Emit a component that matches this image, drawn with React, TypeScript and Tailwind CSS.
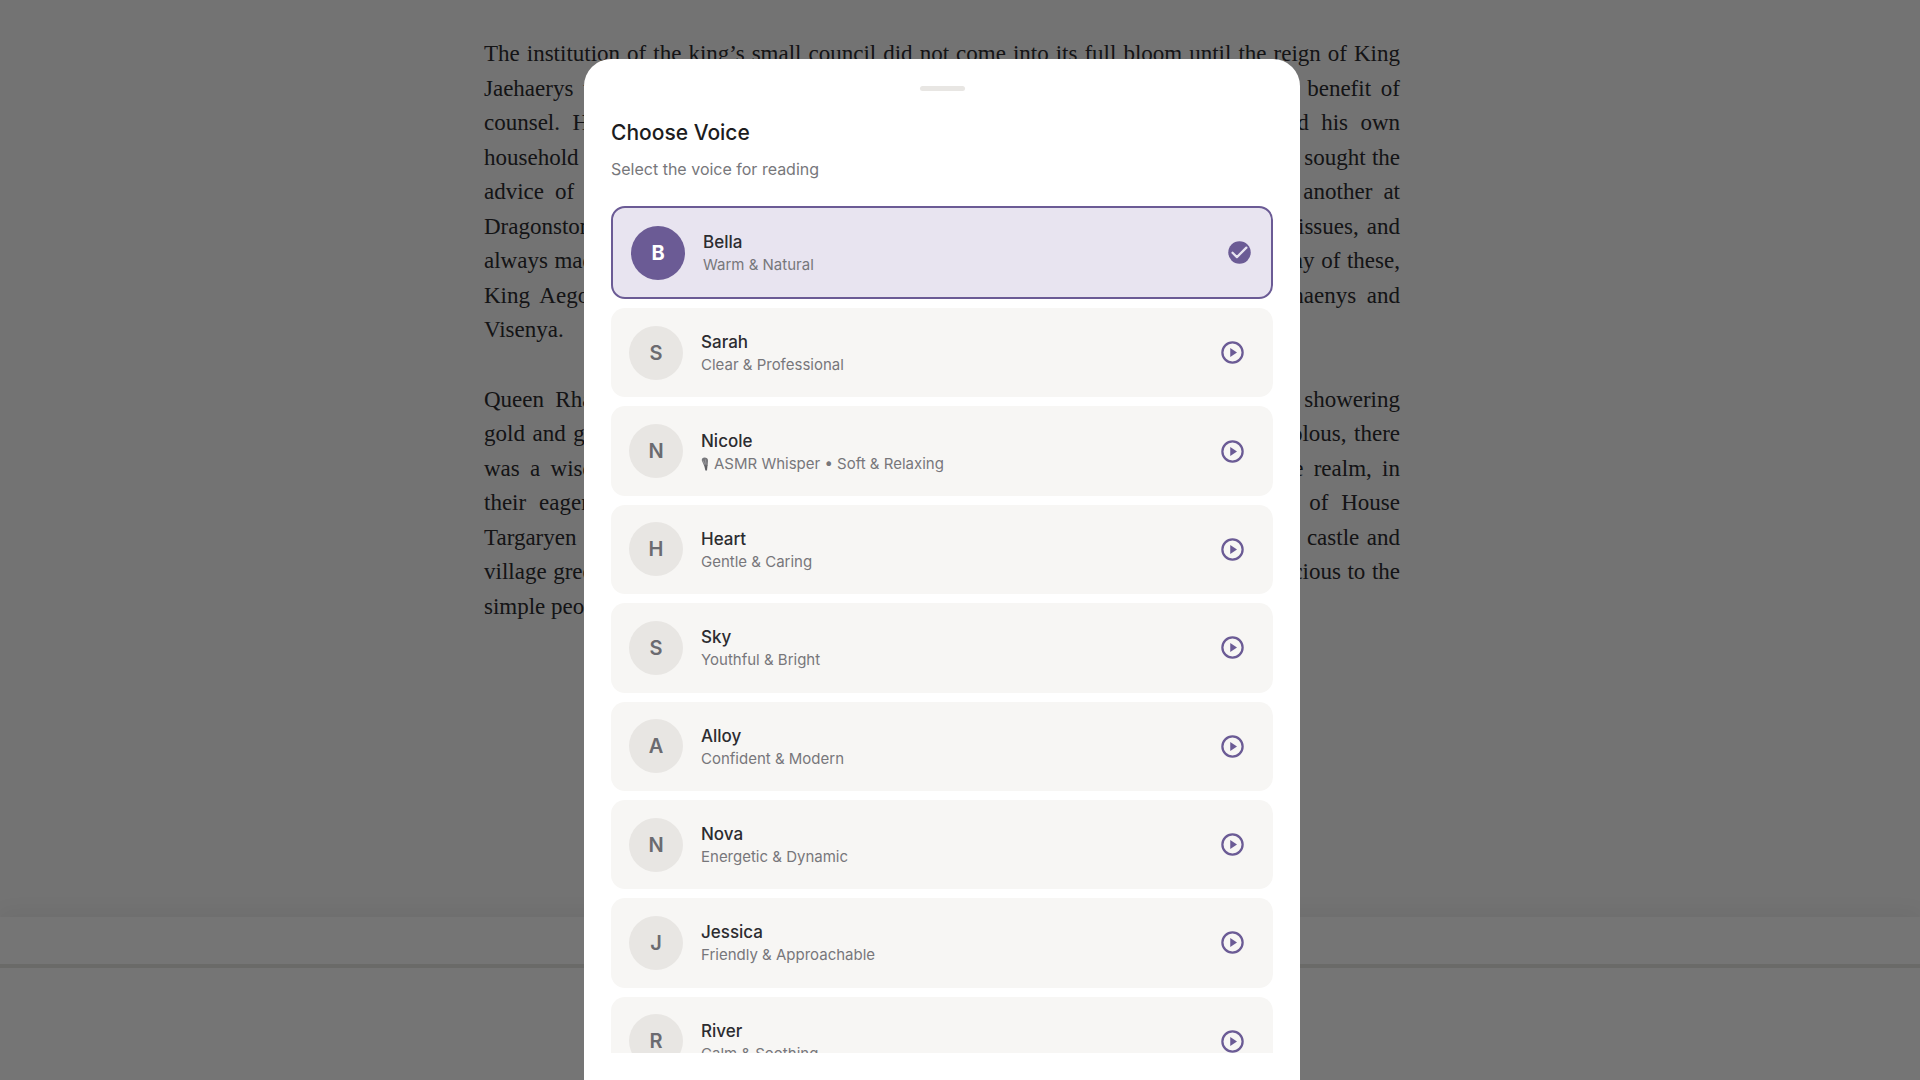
import React, { useState } from "react";

type Voice = {
	name: string;
	description: string;
	mic?: boolean;
};

const voices: Voice[] = [
	{ name: "Sarah", description: "Clear & Professional" },
	{ name: "Nicole", description: "ASMR Whisper • Soft & Relaxing", mic: true },
	{ name: "Heart", description: "Gentle & Caring" },
	{ name: "Sky", description: "Youthful & Bright" },
	{ name: "Alloy", description: "Confident & Modern" },
	{ name: "Nova", description: "Energetic & Dynamic" },
	{ name: "Jessica", description: "Friendly & Approachable" },
	{ name: "River", description: "Calm & Soothing" },
];

const paragraphs: string[][] = [
	[
		"The institution of the king’s small council did not come into its full bloom until the reign of King",
		"Jaehaerys the First, but his forebears did not rule the realm without having had the benefit of",
		"counsel. His grandsire had relied on his sisters, his brothers, on his maesters and his own",
		"household knights and lords in matters of the realm of his whole kingdom, and often he sought the",
		"advice of learned men and of those lords who had come to court at one time or another at",
		"Dragonstone and the city, on questions of law, on points of trade, on taxes and other issues, and",
		"always made use of their wisdom and their learning. But more than he ever relied on any of these,",
		"King Aegon trusted in the sense and sound judgment of both his sister queens, Rhaenys and",
		"Visenya.",
	],
	[
		"Queen Rhaenys was fond of singers and mummers and of those who could play, showering",
		"gold and gifts on those who pleased her. Though some men thought her vain and frivolous, there",
		"was a wisdom in this that was seen in later years, for the singers and bards of the realm, in",
		"their eagerness to win her favor and her coin, made many fine songs in praise of House",
		"Targaryen and of the king and his two queens, and then they carried them far to every castle and",
		"village green from one end of the land to the other, and so made the queen fair and gracious to the",
		"simple people.",
	],
];

function Mic() {
	return (
		<svg viewBox="0 0 9 14" className="w-[9px] h-[14px]" aria-hidden="true">
			<path d="M.8 3.6C.6 1.6 1.8.4 3.6.4s3.6 1 3.4 3.4L6.6 9H3.2Z" fill="#77777b" />
			<path d="M2 3.4l1.6 4M4.4 2.4l.6 5" stroke="#a5a5a8" strokeWidth=".7" />
			<path d="M3.2 8.6h3.3L6 13.6H4.4Z" fill="#5f5f63" />
		</svg>
	);
}

function Avatar({ name, selected }: { name: string; selected?: boolean }) {
	return (
		<span
			className={`flex size-[54px] shrink-0 items-center justify-center rounded-full text-xl ${
				selected
					? "bg-[#6b5b95] text-white font-bold"
					: "bg-[#e8e6e3] text-[#6b6b70] font-semibold"
			}`}
		>
			{name[0]}
		</span>
	);
}

function VoiceText({ name, description, mic }: Voice) {
	return (
		<span className="flex flex-col pt-px">
			<span className="text-[17px] leading-6 font-medium text-[#2c2c30]">{name}</span>
			<span className="flex items-center gap-1 text-[15px] leading-[22px] text-[#77777b]">
				{mic && <Mic />}
				{description}
			</span>
		</span>
	);
}

export default function App() {
	const [playing, setPlaying] = useState("");

	return (
		<div className="relative h-screen overflow-hidden bg-[#fafafa] font-['Inter',sans-serif]">
			<div className="flex h-full flex-col">
				<article className="flex-1 overflow-hidden pr-9 pt-[37px] font-['Liberation_Serif',serif] text-[23px] leading-[1.5] text-[#2c2c30]">
					{paragraphs.map((lines, i) => (
						<p key={i} className="mx-auto mb-[35px] max-w-[916px]">
							{lines.map((line, j) => (
								<span
									key={j}
									className={`block whitespace-nowrap ${
										j < lines.length - 1 ? "[text-align-last:justify]" : ""
									}`}
								>
									{line}
								</span>
							))}
						</p>
					))}
				</article>
				<footer className="h-[163px] bg-white pt-[47px] shadow-[0_-4px_20px_rgba(0,0,0,0.06)]">
					<div className="h-1 bg-[#e8e6e3]" />
				</footer>
			</div>

			<div className="absolute inset-0 flex justify-center bg-black/54 pr-9 pt-[59px]">
				<section
					role="dialog"
					aria-labelledby="voice-title"
					className="flex w-full max-w-[716px] flex-col rounded-t-[27px] bg-white px-[27px] pb-[27px]"
				>
					<div className="mx-auto mt-[27px] h-[5px] w-[45px] shrink-0 rounded-full bg-[#e8e6e3]" />
					<h2 id="voice-title" className="mt-[27px] text-[21px] leading-[30px] font-medium text-[#1c1c20]">
						Choose Voice
					</h2>
					<p className="mt-[9px] text-base leading-6 text-[#77777b]">Select the voice for reading</p>

					<div className="mt-[25px] min-h-0 flex-1 overflow-hidden">
						<button
							type="button"
							aria-pressed="true"
							className="flex h-[93px] w-full items-center gap-[18px] rounded-[14px] border-2 border-[#6b5b95] bg-[#e8e4f0] px-[18px] text-left"
						>
							<Avatar name="Bella" selected />
							<VoiceText name="Bella" description="Warm & Natural" />
							<svg viewBox="0 0 24 24" className="ml-auto size-[27px]" aria-hidden="true">
								<circle cx="12" cy="12" r="10" fill="#6b5b95" />
								<path
									d="M5.8 12.2l3.9 3.9 8.4-8.4"
									fill="none"
									stroke="#e8e4f0"
									strokeWidth="2"
									strokeLinecap="round"
									strokeLinejoin="round"
								/>
							</svg>
						</button>

						<ul className="mt-[9px] flex h-[778px] flex-col gap-[9px]">
							{voices.map((voice) => (
								<li
									key={voice.name}
									className="flex flex-1 items-center rounded-[14px] bg-[#f7f6f4] px-[18px]"
								>
									<button type="button" className="flex flex-1 items-center gap-[18px] text-left">
										<Avatar name={voice.name} />
										<VoiceText {...voice} />
									</button>
									<button
										type="button"
										aria-label={`Play ${voice.name}`}
										aria-pressed={playing === voice.name}
										className="p-[9px]"
										onClick={() => setPlaying(voice.name)}
									>
										<svg viewBox="0 0 24 24" className="size-[27px]" aria-hidden="true">
											<circle cx="12" cy="12" r="9" fill="none" stroke="#6b5b95" strokeWidth="2" />
											<path d="M10 8v8l6-4z" fill="#6b5b95" />
										</svg>
									</button>
								</li>
							))}
						</ul>
					</div>
				</section>
			</div>
		</div>
	);
}
